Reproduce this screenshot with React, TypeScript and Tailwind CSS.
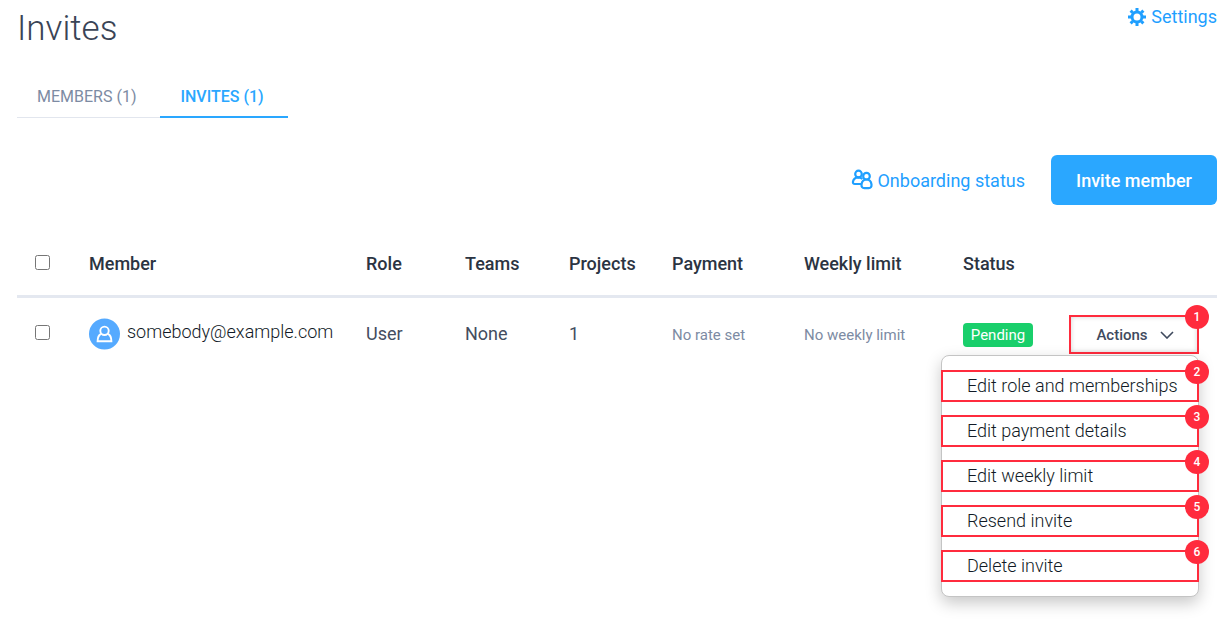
import type { ReactNode } from "react"

const menuItems = [
  "Edit role and memberships",
  "Edit payment details",
  "Edit weekly limit",
  "Resend invite",
  "Delete invite",
]

export default function App() {
  return (
    <main className="min-h-screen bg-white pr-[13px] pl-[17px] font-[Roboto,sans-serif] text-[#2f3a4a]">
      <header className="flex items-start justify-between pt-[5px]">
        <h1 className="pt-1 text-[35px] font-light leading-10 text-[#3a4456]">Invites</h1>
        <a href="#settings" className="flex items-center gap-1 text-lg leading-6 text-[#1f9fff]">
          <GearIcon />
          Settings
        </a>
      </header>

      <nav className="mt-[27px] flex text-base leading-6">
        <a href="#members" className="border-b border-[#e2e6ee] pt-[9px] pr-6 pb-2 pl-5 text-[#7d8ba3]">
          MEMBERS (1)
        </a>
        <a href="#invites" className="border-b-2 border-[#2aa7ff] pt-[9px] pr-6 pb-[7px] pl-5 font-medium text-[#2aa7ff]">
          INVITES (1)
        </a>
      </nav>

      <div className="mt-[37px] flex items-center justify-end gap-[26px]">
        <a href="#onboarding" className="flex items-center gap-1 text-lg text-[#1f9fff]">
          <PeopleIcon />
          <span className="pt-0.5">Onboarding status</span>
        </a>
        <button type="button" className="h-[50px] w-[166px] rounded-md bg-[#2aa7ff] pt-0.5 text-lg font-medium text-white">
          Invite member
        </button>
      </div>

      <table className="mt-[27px] w-full table-fixed text-left">
        <colgroup>
          <col className="w-[72px]" />
          <col />
          <col className="w-[99px]" />
          <col className="w-[104px]" />
          <col className="w-[103px]" />
          <col className="w-[132px]" />
          <col className="w-[159px]" />
          <col className="w-[106px]" />
          <col className="w-[148px]" />
        </colgroup>
        <thead className="border-b-[3px] border-[#e4e8f0]">
          <tr className="h-[64px]">
            <Th>
              <Checkbox label="Select all" />
            </Th>
            <Th>Member</Th>
            <Th>Role</Th>
            <Th>Teams</Th>
            <Th>Projects</Th>
            <Th>Payment</Th>
            <Th>Weekly limit</Th>
            <Th>Status</Th>
            <Th />
          </tr>
        </thead>
        <tbody>
          <tr className="h-[74px]">
            <Td>
              <Checkbox label="Select somebody@example.com" />
            </Td>
            <Td>
              <div className="flex items-center gap-1.5">
                <Avatar />
                <span className="pb-1 font-light text-[#111a26]">somebody@example.com</span>
              </div>
            </Td>
            <Td>User</Td>
            <Td>None</Td>
            <Td>1</Td>
            <Td className="pt-0.5 text-[15px] text-[#7d8ba3]">No rate set</Td>
            <Td className="pt-0.5 text-[15px] text-[#7d8ba3]">No weekly limit</Td>
            <Td className="pt-0.5">
              <span className="block w-[70px] rounded-sm bg-[#19cf6b] text-center text-[15px] leading-6 text-white">
                Pending
              </span>
            </Td>
            <Td className="pt-0.5">
              <ActionsMenu />
            </Td>
          </tr>
        </tbody>
      </table>
    </main>
  )
}

function ActionsMenu() {
  return (
    <div className="relative w-[130px]">
      <button
        type="button"
        aria-expanded="true"
        className="relative flex h-[39px] w-full items-center justify-center gap-3 border-2 border-[#ff2b3d] pl-0.5 text-[15px] font-medium text-[#3f4a5e] shadow-[inset_0_0_5px_#d5d5d5]"
      >
        Actions
        <ChevronIcon />
        <Marker value={1} />
      </button>
      <ul className="absolute top-10 right-0 flex w-[258px] flex-col gap-[13px] rounded-lg border border-[#c4c4c4] bg-white py-[14px] shadow-[0_6px_16px_rgba(0,0,0,0.22)]">
        {menuItems.map((item, i) => (
          <li key={item} className="-mx-px">
            <button
              type="button"
              className="relative block h-8 w-full border-2 border-[#ff2b3d] pl-6 text-left text-lg leading-7 font-light text-[#111a26]"
            >
              {item}
              <Marker value={i + 2} />
            </button>
          </li>
        ))}
      </ul>
    </div>
  )
}

function Marker({ value }: { value: number }) {
  return (
    <span className="absolute -top-3 -right-3 flex size-6 items-center justify-center rounded-full bg-[#ff2b3d] text-xs font-medium text-white">
      {value}
    </span>
  )
}

function Checkbox({ label }: { label: string }) {
  return <input type="checkbox" aria-label={label} className="mb-[3px] ml-[18px] block size-[15px]" />
}

function Th({ children }: { children?: ReactNode }) {
  return <th className="pt-px text-lg font-medium text-[#2b3442]">{children}</th>
}

function Td({ children, className = "text-lg text-[#434d60]" }: { children: ReactNode; className?: string }) {
  return <td className={className}>{children}</td>
}

function GearIcon() {
  return (
    <svg viewBox="0 0 20 20" className="size-5" fill="none" stroke="currentColor">
      <circle cx="10" cy="10" r="5" strokeWidth="3" />
      <path
        d="M10 1v3M10 16v3M1 10h3M16 10h3M3.600 3.600l2.200 2.200M14.200 14.200l2.200 2.200M3.600 16.400l2.200-2.200M14.200 5.800l2.200-2.200"
        strokeWidth="3"
      />
    </svg>
  )
}

function PeopleIcon() {
  return (
    <svg viewBox="0 0 22 22" className="size-[22px]" fill="none" stroke="currentColor" strokeWidth="2.2">
      <circle cx="7.500" cy="5" r="3.300" />
      <circle cx="15.500" cy="7.200" r="3.300" />
      <path d="M10.500 15H4C2.300 15 1.700 14 2 12.500 2.500 10 4.200 8.500 7 8.300c1.800 0 3 .5 4.500 1.500" />
      <path d="M15.500 10.500c3 0 4.600 2 5 5 .2 2.300-.8 3.700-2.800 3.700h-4.400c-2 0-3-1.400-2.800-3.700.4-3 2-5 5-5z" />
    </svg>
  )
}

function Avatar() {
  return (
    <svg viewBox="0 0 32 32" className="size-8 shrink-0" fill="none" stroke="#fff" strokeWidth="1.900">
      <circle cx="15.500" cy="16" r="15.500" fill="#55aaff" stroke="none" />
      <circle cx="15.500" cy="12.800" r="4.200" />
      <path d="M12 15.800C9.400 17.200 8.600 19 8.600 23.200h13.800c0-4.200-.8-6-3.400-7.400" />
    </svg>
  )
}

function ChevronIcon() {
  return (
    <svg viewBox="0 0 14 8" className="h-2 w-[14px]" fill="none" stroke="currentColor" strokeWidth="1.600">
      <path d="M1 1l6 6 6-6" />
    </svg>
  )
}
